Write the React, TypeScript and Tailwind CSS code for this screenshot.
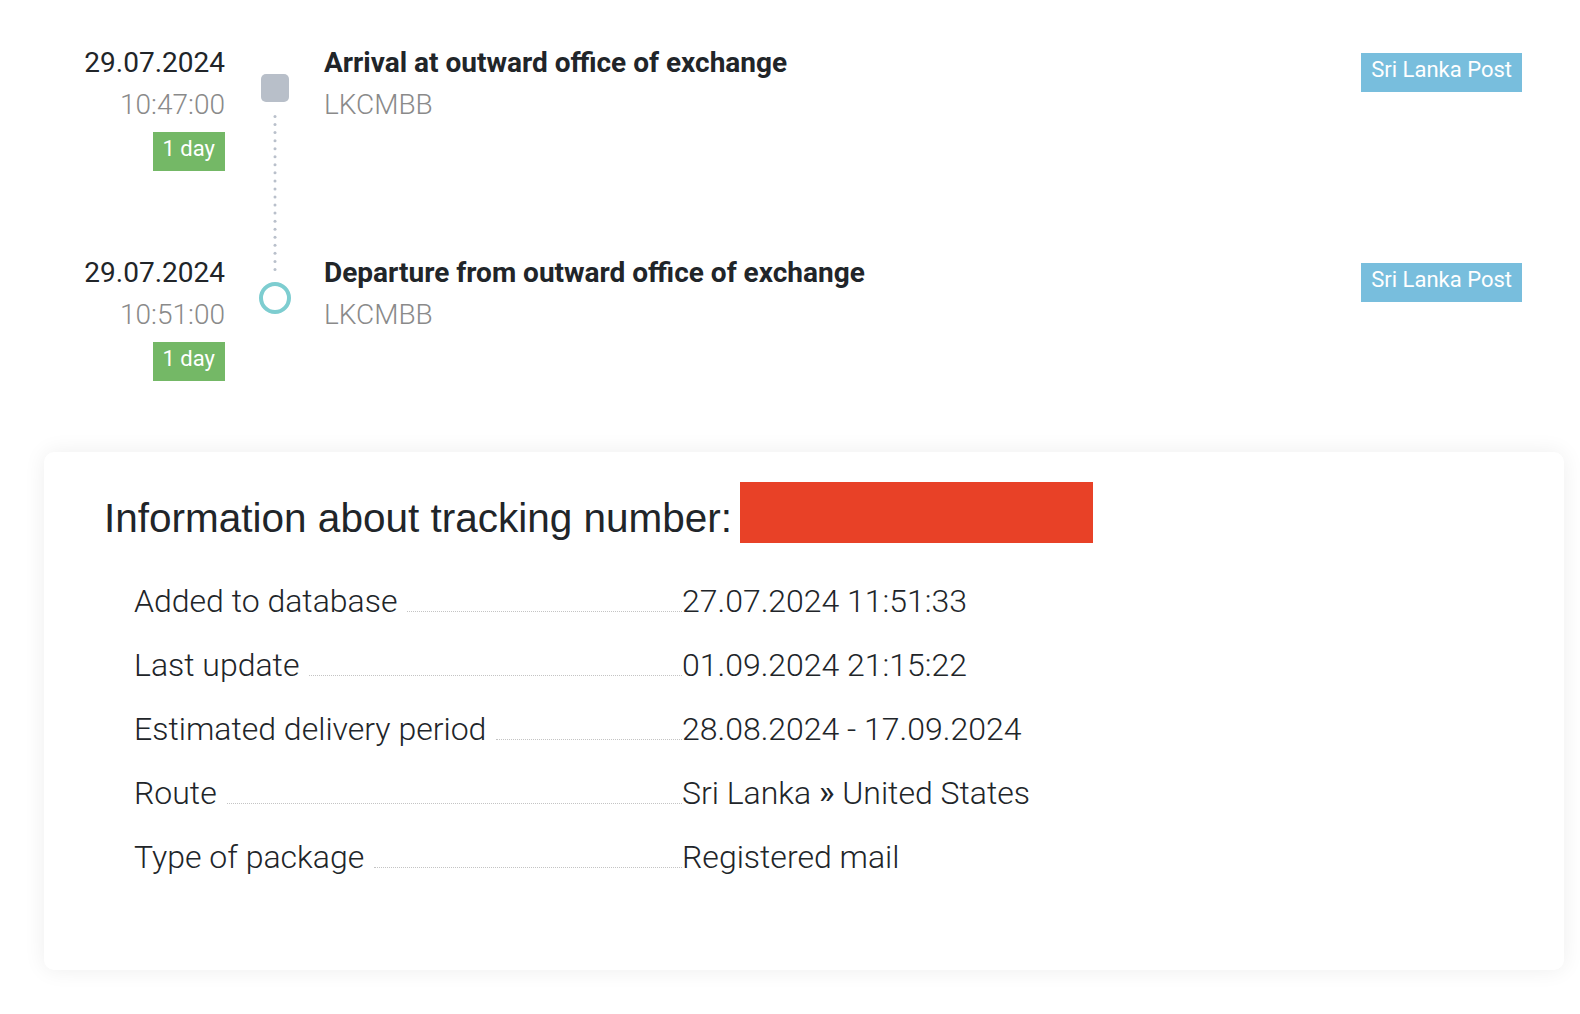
import React from "react";

const roboto = { fontFamily: "Roboto, 'Noto Sans', sans-serif" };

function DottedLine() {
  const dots = [];
  for (let i = 0; i < 20; i++) {
    dots.push(<circle key={i} cx={2} cy={1.5 + i * 8.05} r={1.5} fill="#b9c0cb" />);
  }
  return (
    <svg width="4" height="156" viewBox="0 0 4 156" className="block">
      {dots}
    </svg>
  );
}

function Event({
  date,
  time,
  title,
  code,
  marker,
  rowClass,
}: {
  date: string;
  time: string;
  title: string;
  code: string;
  marker: React.ReactNode;
  rowClass: string;
}) {
  return (
    <div className={`flex items-start ${rowClass}`}>
      <div className="w-[165px] flex flex-col items-end">
        <div className="text-[28px] leading-[42px] text-[#212529]">{date}</div>
        <div className="text-[28px] leading-[42px] font-light text-[#8a8a8a]">{time}</div>
        <div className="mt-[6px] h-[39px] px-[10px] pb-[6px] flex items-center bg-[#74b866] text-white text-[22px]">
          1 day
        </div>
      </div>
      <div className="w-[99px] flex flex-col items-center">{marker}</div>
      <div className="flex-1 flex flex-col">
        <div className="text-[28px] leading-[42px] font-bold text-[#212529]">{title}</div>
        <div className="text-[28px] leading-[42px] font-light text-[#8a8a8a]">{code}</div>
      </div>
      <div className="mt-[11px] h-[39px] px-[10px] pb-[6px] flex items-center bg-[#78bedd] text-white text-[22px]">
        Sri Lanka Post
      </div>
    </div>
  );
}

const rows: [string, React.ReactNode][] = [
  ["Added to database", "27.07.2024 11:51:33"],
  ["Last update", "01.09.2024 21:15:22"],
  ["Estimated delivery period", "28.08.2024 - 17.09.2024"],
  [
    "Route",
    <>
      Sri Lanka <span className="font-normal text-[33px]">»</span> United States
    </>,
  ],
  ["Type of package", "Registered mail"],
];

export default function App() {
  return (
    <div className="min-h-screen w-full bg-white" style={roboto}>
      <div className="pt-[42px] pl-[60px] pr-[58px]">
        <Event
          date="29.07.2024"
          time="10:47:00"
          title="Arrival at outward office of exchange"
          code="LKCMBB"
          rowClass="h-[210px]"
          marker={
            <>
              <div className="mt-[31.5px] w-[28px] h-[28px] rounded-[5px] bg-[#b8bfc9]" />
              <div className="mt-[13.5px]">
                <DottedLine />
              </div>
            </>
          }
        />
        <Event
          date="29.07.2024"
          time="10:51:00"
          title="Departure from outward office of exchange"
          code="LKCMBB"
          rowClass=""
          marker={
            <div className="mt-[30px] w-[32px] h-[32px] rounded-full border-[4px] border-[#7dcdd0]" />
          }
        />
      </div>
      <div className="ml-[44px] mr-[16px] mt-[71px] rounded-[10px] bg-white shadow-[0_0_22px_rgba(0,0,0,0.07)] pt-[42px] pl-[60px] pb-[81px]">
        <div className="flex items-start">
          <div
            className="text-[40.5px] leading-[48px] text-[#212529]"
            style={{ fontFamily: "'Liberation Sans', Arial, sans-serif" }}
          >
            Information about tracking number:
          </div>
          <div className="ml-[8px] -mt-[12px] -mb-[1px] w-[353px] h-[61px] bg-[#e84127]" />
        </div>
        <div className="mt-[27px] ml-[30px] flex flex-col">
          {rows.map(([label, value], i) => (
            <div key={i} className="flex items-baseline h-[64px] text-[32px] leading-[64px] font-light text-[#212529]">
              <div className="w-[548px] flex items-baseline">
                <span className="whitespace-nowrap">{label}</span>
                <div className="flex-1 ml-[10px] border-b border-dotted border-[#c4c4c4]" />
              </div>
              <span className="whitespace-nowrap">{value}</span>
            </div>
          ))}
        </div>
      </div>
    </div>
  );
}
